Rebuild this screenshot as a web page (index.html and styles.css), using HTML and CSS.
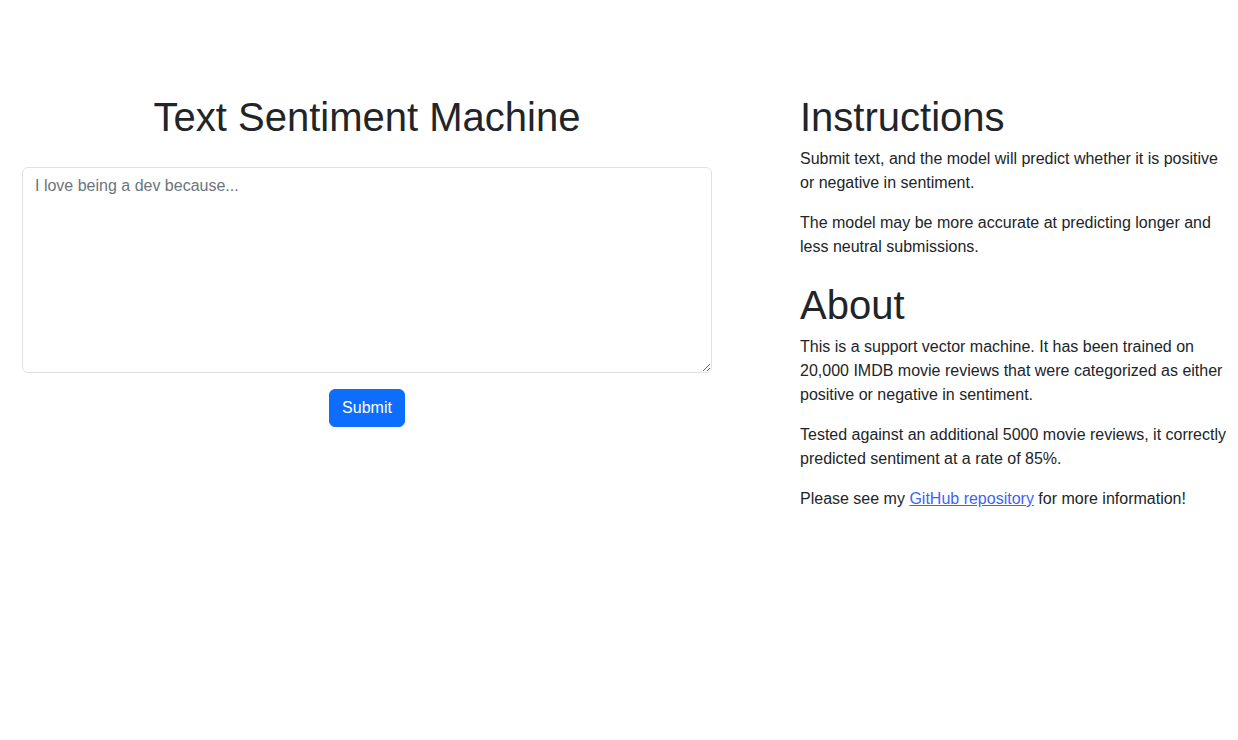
FILE: index.html
```html
<!DOCTYPE html>
<html lang="en">
<head>
<meta charset="utf-8">
<title>Text Sentiment Machine</title>
<link rel="stylesheet" href="styles.css">
</head>
<body>
<main class="page">
  <section class="left">
    <h1 class="title">Text Sentiment Machine</h1>
    <form class="form">
      <textarea class="input" placeholder="I love being a dev because..."></textarea>
      <button type="button" class="btn">Submit</button>
    </form>
  </section>
  <section class="right">
    <h1 class="heading">Instructions</h1>
    <p>Submit text, and the model will predict whether it is positive or negative in sentiment.</p>
    <p>The model may be more accurate at predicting longer and less neutral submissions.</p>
    <h1 class="heading">About</h1>
    <p>This is a support vector machine. It has been trained on 20,000 IMDB movie reviews that were categorized as either positive or negative in sentiment.</p>
    <p>Tested against an additional 5000 movie reviews, it correctly predicted sentiment at a rate of 85%.</p>
    <p>Please see my <a href="#" class="link">GitHub repository</a> for more information!</p>
  </section>
</main>
</body>
</html>
```

FILE: styles.css
```css
* { box-sizing: border-box; }
html, body { margin: 0; padding: 0; background: #fff; }
body {
  font-family: "Liberation Sans", Arial, sans-serif;
  font-size: 16px;
  line-height: 1.5;
  color: #212529;
}
.page {
  display: flex;
  align-items: flex-start;
  padding: 93px 10px 0 22px;
  gap: 88px;
}
.left { width: 690px; flex: none; }
.right { width: 428px; flex: none; }
h1 {
  font-size: 40px;
  font-weight: 500;
  line-height: 1.2;
  margin: 0 0 8px 0;
}
.title {
  text-align: center;
  margin-bottom: 26px;
}
.heading { margin-bottom: 6px; }
p { margin: 0 0 16px 0; }
.right p + .heading { margin-top: 22px; }
.form {
  display: flex;
  flex-direction: column;
  align-items: center;
}
.input {
  display: block;
  width: 100%;
  height: 206px;
  padding: 6px 12px;
  font-family: inherit;
  font-size: 16px;
  line-height: 1.5;
  color: #212529;
  border: 1px solid #dee2e6;
  border-radius: 6px;
  margin: 0 0 16px 0;
  resize: vertical;
  outline: none;
}
.input::placeholder { color: #6c757d; opacity: 1; }
.btn {
  font-family: inherit;
  font-size: 16px;
  line-height: 1.5;
  padding: 6px 12px;
  color: #fff;
  background: #0d6efd;
  border: 1px solid #0d6efd;
  border-radius: 6px;
  cursor: pointer;
}
.link { color: #3d63f7; text-decoration: underline; }
```
